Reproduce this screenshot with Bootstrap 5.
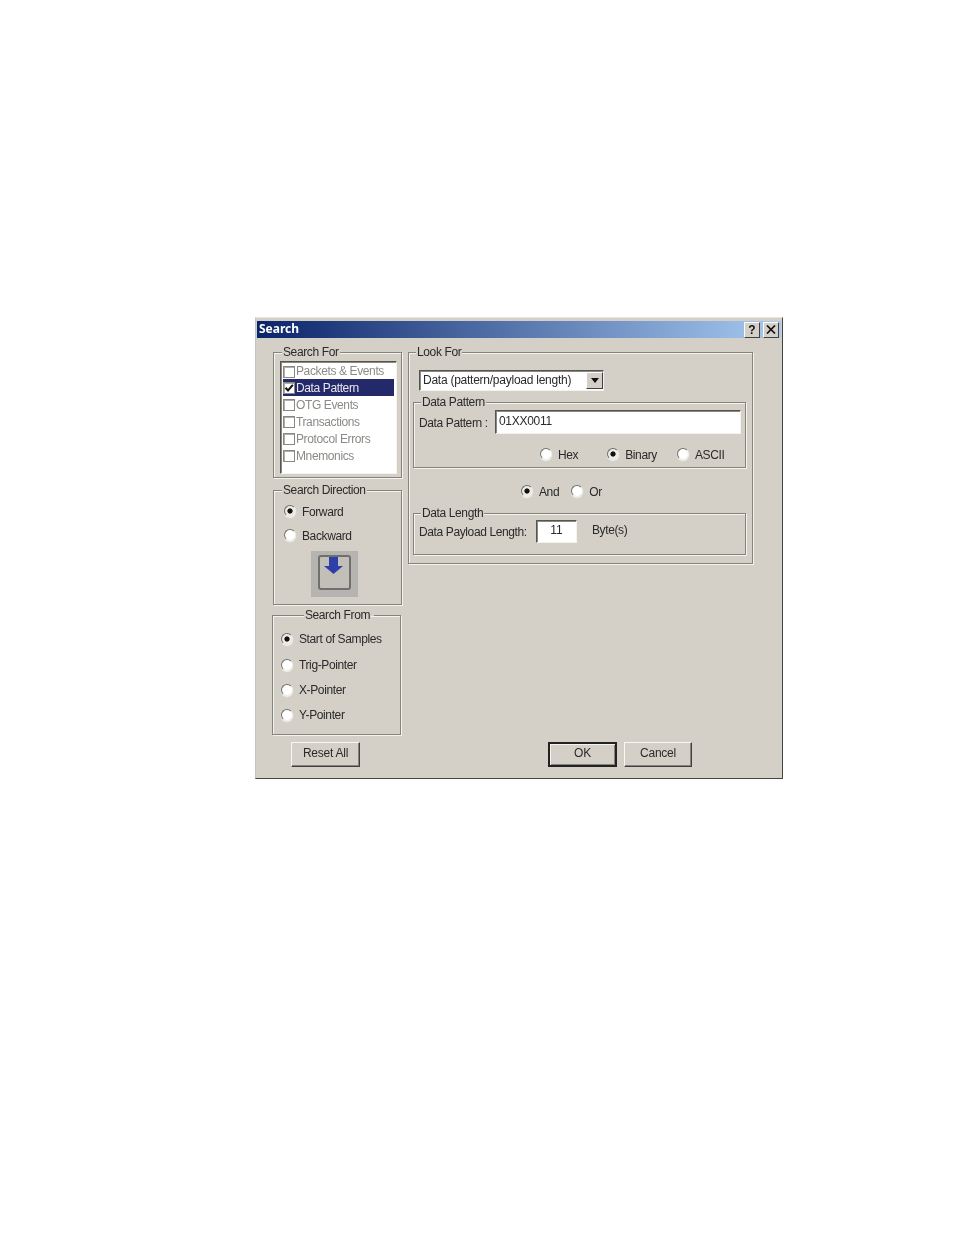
<!DOCTYPE html>
<html lang="en">
<head>
<meta charset="utf-8">
<title>Search</title>
<link href="https://cdn.jsdelivr.net/npm/bootstrap@5.3.0/dist/css/bootstrap.min.css" rel="stylesheet">
<style>
html,body{background:#fff;margin:0;padding:0}
body{font-family:"Liberation Sans",Arial,sans-serif;font-size:12px;letter-spacing:-.38px;line-height:14px;color:#2a2a2a}
.dlg{box-sizing:border-box;width:528px;height:462px;margin:317px 0 0 255px;padding:3px 1px 0;background:#d4d0c8;border:1px solid;border-color:#e6e4dc #45453f #45453f #c8c5bc;filter:blur(.35px)}
.ttl{height:17px;background:linear-gradient(90deg,#0a246a,#a6caf0);padding:0 2px;color:#fff;font:700 12px/15px "Noto Sans",sans-serif;letter-spacing:0}
.ttl>span:first-child{padding-bottom:3px}
.tbtn{width:16px;height:16px;background:#d4d0c8;border:1px solid;border-color:#fff #404040 #404040 #fff;color:#111;font:700 12px/14px "Liberation Sans",sans-serif;text-align:center}
.tbtn+.tbtn{margin-left:3px}
.bdy{padding:7px 0 0 16px}
.lcol{width:129px}
.gb{border:1px solid #85847c;box-shadow:1px 1px 0 #f4f3ee,inset 1px 1px 0 #f4f3ee;min-width:0;margin:0}
.gb>legend{float:none;width:auto;margin:0;padding:0 1px;font-size:12px;line-height:14px;background:#d4d0c8;color:#2a2a2a}
.g1>legend{margin-left:2px}
.g2>legend{margin-left:-2px}
.g3>legend.mid{margin:0 auto;position:relative;left:-3px}
.g4>legend{margin-left:-3px}
.g5>legend,.g6>legend{margin-left:2px}
.g1{height:133px;padding:2px 0 0 6px}
.g2{height:122px;margin-top:5px;padding:2px 0 0 10px}
.g3{height:127px;width:129px;margin:3px 0 0 -1px;padding:4px 0 0 8px}
.lbx{width:117px;height:113px;padding:1px 2px;background:#fff;border:1px solid;border-color:#55544e #f4f3ee #f4f3ee #55544e;box-shadow:inset 1px 1px 0 #8a8981;border-radius:0}
.lbx .list-group-item{height:17px;padding:1px 0 0;border:0;border-radius:0;background:transparent;color:#8b8a86;font-size:12px;line-height:15px;display:flex;align-items:center;gap:1px}
.lbx .list-group-item:first-child{padding-top:0}
.lbx .list-group-item.active{background:#24296a;color:#e8e8f0}
.cbx{flex:none;display:flex;width:12px;height:12px;background:#fff;border:1px solid #8a8981;box-shadow:inset 1px 1px 0 #b0aea7}
.rw{height:24px;display:flex;align-items:center}
.form-check-input.rd{appearance:none;flex:none;width:12px;height:12px;margin:0;border-radius:50%;background:#fff;border:1px solid;border-color:#6f6e68 #eeece6 #eeece6 #6f6e68;box-shadow:0 1px 1px #f4f3ee;float:none}
.form-check-input.rd:checked[type=radio]{background:radial-gradient(circle,#111 0 2.2px,#ecebe6 3px);border-color:#6f6e68 #eeece6 #eeece6 #6f6e68}
.s12{margin-left:6px}
.g2 .s12{padding-top:2px}
.ic{width:47px;height:46px;margin:4px 0 0 27px;padding-top:4px;background:#b5b4b0;display:flex;justify-content:center}
.g3 .rw{height:25px}
.g3 .rw.r1{height:26px}
.rcol{width:345px;margin-left:6px}
.g4{height:219px;padding:11px 0 0 10px}
.cmb{width:185px;height:21px;background:#fff;border:1px solid;border-color:#55544e #f4f3ee #f4f3ee #55544e;box-shadow:inset 1px 1px 0 #8a8981;padding-left:3px;line-height:19px;letter-spacing:-.25px}
.arr{width:17px;height:17px;margin:1px 0 0 auto;background:#d4d0c8;border:1px solid;border-color:#fff #404040 #404040 #fff;display:flex;align-items:center;justify-content:center}
.g5{width:333px;height:73px;margin:4px 0 0 -6px;padding:1px 0 0 5px}
.g6{width:333px;height:49px;margin:6px 0 0 -6px;padding:0 0 0 5px}
.fld.form-control{border-radius:0;background:#fff;border:1px solid;border-color:#55544e #f4f3ee #f4f3ee #55544e;box-shadow:inset 1px 1px 0 #8a8981;padding:0 0 3px 3px;font-size:12px;letter-spacing:-.3px;line-height:14px;color:#2a2a2a;min-height:0}
.f1.form-control{width:246px;height:24px}
.f2.form-control{width:41px;height:23px;text-align:center;padding:0 0 3px;letter-spacing:0}
.lb1{width:76px;padding-top:1px}
.lb2{width:117px}
.rr{height:18px;display:flex;align-items:center}
.r5{margin:11px 0 0 121px}
.t{margin-left:6px;padding-top:1px}
.form-check-input.rd.m1{margin-left:29px}
.form-check-input.rd.m2{margin-left:20px}
.r6{margin:14px 0 0 102px}
.form-check-input.rd.m3{margin-left:12px}
.byt{margin:-4px 0 0 15px}
.ftr{padding:7px 0 0 34px}
.wb.btn{width:69px;height:25px;padding:0 0 3px;border-radius:0;background:#d4d0c8;border:1px solid;border-color:#f8f7f3 #404040 #404040 #f8f7f3;box-shadow:inset -1px -1px 0 #85847c;color:#2a2a2a;font-size:12px;letter-spacing:-.25px;line-height:14px}
.wb.dft.btn{border:2px solid #222;padding:0 0 3px;margin-left:188px;box-shadow:inset 1px 1px 0 #f4f3ee,inset -1px -1px 0 #85847c}
.wb.cnl.btn{margin-left:7px;width:68px}
</style>
</head>
<body>
<div class="dlg">
  <div class="ttl d-flex align-items-center">
    <span>Search</span>
    <span class="tbtn ms-auto">?</span>
    <span class="tbtn d-flex align-items-center justify-content-center"><svg width="10" height="9" viewBox="0 0 10 9"><path d="M1 .5 9 8.5M9 .5 1 8.5" stroke="#111" stroke-width="1.7" fill="none"/></svg></span>
  </div>
  <div class="bdy d-flex">
    <div class="lcol">
      <fieldset class="gb g1">
        <legend>Search For</legend>
        <div class="lbx list-group">
          <div class="list-group-item"><span class="cbx"></span>Packets &amp; Events</div>
          <div class="list-group-item active"><span class="cbx"><svg width="10" height="10" viewBox="0 0 10 10"><path d="M1.5 4.8 4 7.5 8.8 1.8" stroke="#111" stroke-width="2" fill="none"/></svg></span>Data Pattern</div>
          <div class="list-group-item"><span class="cbx"></span>OTG Events</div>
          <div class="list-group-item"><span class="cbx"></span>Transactions</div>
          <div class="list-group-item"><span class="cbx"></span>Protocol Errors</div>
          <div class="list-group-item"><span class="cbx"></span>Mnemonics</div>
        </div>
      </fieldset>
      <fieldset class="gb g2">
        <legend>Search Direction</legend>
        <label class="rw"><input class="form-check-input rd" type="radio" name="dir" checked><span class="s12">Forward</span></label>
        <label class="rw"><input class="form-check-input rd" type="radio" name="dir"><span class="s12">Backward</span></label>
        <div class="ic"><svg width="33" height="35" viewBox="0 0 33 35"><rect x="1" y="1" width="31" height="33" rx="2" fill="#c2bfb8" stroke="#6f6f6d" stroke-width="2"/><path d="M11 2H20V11H25L15.5 19 6 11H11Z" fill="#2f3fa8"/></svg></div>
      </fieldset>
      <fieldset class="gb g3">
        <legend class="mid">Search From</legend>
        <label class="rw r1"><input class="form-check-input rd" type="radio" name="frm" checked><span class="s12">Start of Samples</span></label>
        <label class="rw"><input class="form-check-input rd" type="radio" name="frm"><span class="s12">Trig-Pointer</span></label>
        <label class="rw"><input class="form-check-input rd" type="radio" name="frm"><span class="s12">X-Pointer</span></label>
        <label class="rw"><input class="form-check-input rd" type="radio" name="frm"><span class="s12">Y-Pointer</span></label>
      </fieldset>
    </div>
    <div class="rcol">
      <fieldset class="gb g4">
        <legend>Look For</legend>
        <div class="cmb d-flex"><span>Data (pattern/payload length)</span><span class="arr"><svg width="8" height="5" viewBox="0 0 8 5"><path d="M0 0H8L4 5Z" fill="#111"/></svg></span></div>
        <fieldset class="gb g5">
          <legend>Data Pattern</legend>
          <div class="d-flex align-items-center"><span class="lb1">Data Pattern :</span><input class="form-control fld f1" type="text" value="01XX0011"></div>
          <div class="rr r5">
            <input class="form-check-input rd" type="radio" name="fmt"><span class="t">Hex</span>
            <input class="form-check-input rd m1" type="radio" name="fmt" checked><span class="t">Binary</span>
            <input class="form-check-input rd m2" type="radio" name="fmt"><span class="t">ASCII</span>
          </div>
        </fieldset>
        <div class="rr r6">
          <input class="form-check-input rd" type="radio" name="lg" checked><span class="t">And</span>
          <input class="form-check-input rd m3" type="radio" name="lg"><span class="t">Or</span>
        </div>
        <fieldset class="gb g6">
          <legend>Data Length</legend>
          <div class="d-flex align-items-center"><span class="lb2">Data Payload Length:</span><input class="form-control fld f2" type="text" value="11"><span class="byt">Byte(s)</span></div>
        </fieldset>
      </fieldset>
    </div>
  </div>
  <div class="ftr d-flex">
    <button type="button" class="btn wb">Reset All</button>
    <button type="button" class="btn wb dft">OK</button>
    <button type="button" class="btn wb cnl">Cancel</button>
  </div>
</div>
<script src="https://cdn.jsdelivr.net/npm/bootstrap@5.3.0/dist/js/bootstrap.bundle.min.js"></script>
</body>
</html>
